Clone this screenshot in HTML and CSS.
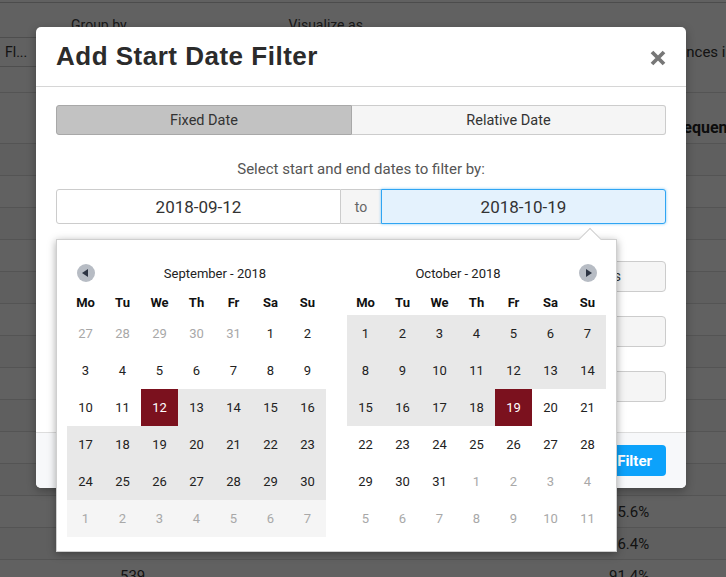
FILE: index.html
```html
<!DOCTYPE html>
<html>
<head>
<meta charset="utf-8">
<link rel="stylesheet" href="styles.css">
</head>
<body>
<div class="page">
  <div class="topline"></div>
  <div class="toolbar">
    <div class="tb-labels">
      <span class="lbl lbl-group">Group by</span>
      <span class="lbl lbl-vis">Visualize as</span>
    </div>
    <div class="tb-controls">
      <div class="fake-select">Fl...</div>
      <span class="occ">Occurrences in</span>
    </div>
  </div>
  <div class="thead"><span class="th-freq">Frequency</span></div>
  <div class="tbody">
    <div class="trow"></div><div class="trow"></div><div class="trow"></div><div class="trow"></div>
    <div class="trow"></div><div class="trow"></div><div class="trow"></div><div class="trow"></div>
    <div class="trow"></div><div class="trow"></div><div class="trow"></div>
    <div class="trow"><span class="c-num"></span><span class="c-pct">95.6%</span></div>
    <div class="trow"><span class="c-num"></span><span class="c-pct">96.4%</span></div>
    <div class="trow"><span class="c-num">539</span><span class="c-pct">91.4%</span></div>
  </div>

  <div class="overlay"></div>

  <div class="modal">
    <div class="modal-header">
      <h1 class="title">Add Start Date Filter</h1>
      <svg class="close" width="16" height="16" viewBox="0 0 16 16"><path d="M2 2 L14 14 M14 2 L2 14" stroke="#777" stroke-width="3.8" stroke-linecap="butt"/></svg>
    </div>
    <div class="modal-body">
      <div class="tabs">
        <div class="tab tab-active">Fixed Date</div>
        <div class="tab tab-other">Relative Date</div>
      </div>
      <p class="hint">Select start and end dates to filter by:</p>
      <div class="range">
        <div class="date-input">2018-09-12</div>
        <div class="to">to</div>
        <div class="date-input date-focus">2018-10-19</div>
      </div>
      <div class="form-rows">
        <div class="form-row"><div class="field">Periods</div></div>
        <div class="form-row"><div class="field"></div></div>
        <div class="form-row"><div class="field"></div></div>
      </div>

      <div class="picker">
        <div class="picker-arrow"></div>
        <div class="month">
          <div class="month-head">
            <span class="nav"><span class="nav-btn"><span class="tri tri-left"></span></span></span>
            <span class="month-title">September - 2018</span>
          </div>
          <div class="grid">
            <span class="dow">Mo</span><span class="dow">Tu</span><span class="dow">We</span><span class="dow">Th</span><span class="dow">Fr</span><span class="dow">Sa</span><span class="dow">Su</span>
            <span class="d off">27</span><span class="d off">28</span><span class="d off">29</span><span class="d off">30</span><span class="d off">31</span><span class="d">1</span><span class="d">2</span>
            <span class="d">3</span><span class="d">4</span><span class="d">5</span><span class="d">6</span><span class="d">7</span><span class="d">8</span><span class="d">9</span>
            <span class="d">10</span><span class="d">11</span><span class="d sel">12</span><span class="d in">13</span><span class="d in">14</span><span class="d in">15</span><span class="d in">16</span>
            <span class="d in">17</span><span class="d in">18</span><span class="d in">19</span><span class="d in">20</span><span class="d in">21</span><span class="d in">22</span><span class="d in">23</span>
            <span class="d in">24</span><span class="d in">25</span><span class="d in">26</span><span class="d in">27</span><span class="d in">28</span><span class="d in">29</span><span class="d in">30</span>
            <span class="d off in-light">1</span><span class="d off in-light">2</span><span class="d off in-light">3</span><span class="d off in-light">4</span><span class="d off in-light">5</span><span class="d off in-light">6</span><span class="d off in-light">7</span>
          </div>
        </div>
        <div class="month">
          <div class="month-head">
            <span class="month-title">October - 2018</span>
            <span class="nav"><span class="nav-btn"><span class="tri tri-right"></span></span></span>
          </div>
          <div class="grid">
            <span class="dow">Mo</span><span class="dow">Tu</span><span class="dow">We</span><span class="dow">Th</span><span class="dow">Fr</span><span class="dow">Sa</span><span class="dow">Su</span>
            <span class="d in">1</span><span class="d in">2</span><span class="d in">3</span><span class="d in">4</span><span class="d in">5</span><span class="d in">6</span><span class="d in">7</span>
            <span class="d in">8</span><span class="d in">9</span><span class="d in">10</span><span class="d in">11</span><span class="d in">12</span><span class="d in">13</span><span class="d in">14</span>
            <span class="d in">15</span><span class="d in">16</span><span class="d in">17</span><span class="d in">18</span><span class="d sel">19</span><span class="d">20</span><span class="d">21</span>
            <span class="d">22</span><span class="d">23</span><span class="d">24</span><span class="d">25</span><span class="d">26</span><span class="d">27</span><span class="d">28</span>
            <span class="d">29</span><span class="d">30</span><span class="d">31</span><span class="d off">1</span><span class="d off">2</span><span class="d off">3</span><span class="d off">4</span>
            <span class="d off">5</span><span class="d off">6</span><span class="d off">7</span><span class="d off">8</span><span class="d off">9</span><span class="d off">10</span><span class="d off">11</span>
          </div>
        </div>
      </div>
    </div>
    <div class="modal-footer">
      <button class="btn-primary">Add Filter</button>
    </div>
  </div>
</div>
</body>
</html>
```
FILE: styles.css
```css
* { box-sizing: border-box; }
html, body { margin: 0; padding: 0; }
body { font-family: Roboto, "Liberation Sans", sans-serif; color: #333; }

.page {
  width: 726px;
  height: 577px;
  position: relative;
  overflow: hidden;
  background: #fff;
  font-size: 14px;
}

/* background page */
.topline { height: 3px; border-bottom: 1px solid #c8c8c8; }
.toolbar {
  height: 90px;
  border-bottom: 1px solid #ddd;
  display: flex;
  flex-direction: column;
}
.tb-labels { display: flex; padding-top: 14px; height: 34px; }
.lbl { color: #444; font-size: 14px; }
.lbl-group { margin-left: 71px; }
.lbl-vis { margin-left: 162px; }
.tb-controls { display: flex; align-items: center; height: 30px; }
.fake-select {
  flex-shrink: 0;
  width: 60px;
  height: 30px;
  border: 1px solid #ccc;
  border-left: 0;
  padding: 6px 0 0 5px;
  font-size: 14px;
  color: #333;
}
.occ { flex-shrink: 0; margin-left: 574px; font-size: 15px; color: #333; white-space: nowrap; }

.thead {
  height: 51px;
  border-bottom: 1px solid #ddd;
  display: flex;
  align-items: flex-end;
  padding-bottom: 6px;
}
.th-freq { flex-shrink: 0; margin-left: 669px; font-weight: 700; font-size: 16px; white-space: nowrap; color: #222; }
.tbody { display: flex; flex-direction: column; }
.trow {
  height: 32px;
  border-bottom: 1px solid #ddd;
  display: flex;
  align-items: center;
  flex-shrink: 0;
}
.trow:nth-child(odd) { background: #fafafa; }
.c-num { flex-shrink: 0; width: 600px; padding-left: 120px; color: #333; font-size: 15px; }
.c-pct { flex-shrink: 0; padding-left: 9px; color: #333; font-size: 15px; }

.overlay { position: absolute; inset: 0; background: rgba(0, 0, 0, 0.62); }

/* modal */
.modal {
  position: absolute;
  left: 36px;
  top: 27px;
  width: 650px;
  height: 461px;
  background: #fff;
  border-radius: 5px;
  display: flex;
  flex-direction: column;
  box-shadow: 0 3px 10px rgba(0,0,0,.3);
}
.modal-header {
  height: 60px;
  border-bottom: 1px solid #d6d6d6;
  display: flex;
  align-items: center;
  justify-content: space-between;
  padding: 0 20px;
  flex-shrink: 0;
}
.title {
  margin: 0;
  font-family: "Liberation Sans", Arial, sans-serif;
  font-size: 26px;
  font-weight: 700;
  color: #2b2b2b;
  letter-spacing: 0.5px;
}
.close { display: block; margin-top: 2px; }

.modal-body {
  position: relative;
  flex: 1;
  padding: 18px 20px 0;
}
.tabs { display: flex; height: 30px; }
.tab {
  display: flex;
  align-items: center;
  justify-content: center;
  font-size: 14.5px;
  color: #333;
  padding-top: 1px;
}
.tab-active {
  width: 296px;
  background: #c2c2c2;
  border: 1px solid #a8a8a8;
  border-radius: 3px 0 0 3px;
}
.tab-other {
  flex: 1;
  background: #f5f5f5;
  border: 1px solid #ccc;
  border-left: 0;
  border-radius: 0 3px 3px 0;
}
.hint {
  margin: 24px 0 0;
  height: 20px;
  line-height: 20px;
  text-align: center;
  font-size: 15px;
  color: #555;
}
.range { display: flex; height: 35px; margin-top: 10px; }
.date-input {
  width: 285px;
  border: 1px solid #ccc;
  display: flex;
  align-items: center;
  justify-content: center;
  font-size: 17px;
  color: #333;
  background: #fff;
}
.date-input:first-child { border-radius: 3px 0 0 3px; }
.to {
  width: 40px;
  background: #f5f5f5;
  border-top: 1px solid #ccc;
  border-bottom: 1px solid #ccc;
  display: flex;
  align-items: center;
  justify-content: center;
  font-size: 14px;
  color: #666;
}
.date-focus {
  background: #e4f2fd;
  border: 1px solid #2fa5f3;
  border-radius: 0 3px 3px 0;
  box-shadow: 0 0 3px rgba(47,165,243,.6);
}
.form-rows {
  display: flex;
  flex-direction: column;
  gap: 24px;
  margin-top: 37px;
}
.form-row { display: flex; justify-content: flex-end; }
.field {
  width: 300px;
  height: 31px;
  border: 1px solid #ccc;
  border-radius: 4px;
  background: #f5f5f5;
  text-align: right;
  padding: 6px 44px 0 0;
  font-size: 14px;
  color: #333;
}

.modal-footer {
  height: 56px;
  border-top: 1px solid #ddd;
  background: #f7f8fa;
  display: flex;
  align-items: center;
  justify-content: flex-end;
  padding: 0 20px;
  border-radius: 0 0 5px 5px;
  flex-shrink: 0;
}
.btn-primary {
  height: 31px;
  padding: 0 14px;
  background: #0ca2fb;
  color: #fff;
  border: 0;
  border-radius: 4px;
  font-family: Roboto, "Liberation Sans", sans-serif;
  font-size: 15px;
  font-weight: 700;
}

/* date picker */
.picker {
  position: absolute;
  left: 20px;
  top: 152px;
  width: 561px;
  height: 313px;
  background: #fff;
  border: 1px solid #cfcfcf;
  box-shadow: 0 2px 8px rgba(0,0,0,.35);
  display: flex;
  gap: 21px;
  padding: 18px 10px 0;
}
.picker-arrow {
  position: absolute;
  top: -9px;
  left: 525px;
  width: 16px;
  height: 16px;
  background: #fff;
  border-left: 1px solid #cfcfcf;
  border-top: 1px solid #cfcfcf;
  transform: rotate(45deg);
}
.month { width: 259px; }
.month-head { display: flex; align-items: center; height: 30px; }
.nav { width: 37px; display: flex; justify-content: center; }
.nav-btn {
  width: 18px;
  height: 18px;
  border-radius: 50%;
  background: #b7bcc4;
  display: flex;
  align-items: center;
  justify-content: center;
}
.tri { width: 0; height: 0; border-top: 4px solid transparent; border-bottom: 4px solid transparent; }
.tri-left { border-right: 6px solid #2d3443; margin-left: -2px; }
.tri-right { border-left: 6px solid #2d3443; margin-left: 2px; }
.month-title { flex: 1; text-align: center; font-size: 13px; color: #222; }
.grid {
  display: grid;
  grid-template-columns: repeat(7, 37px);
  grid-auto-rows: 37px;
  grid-template-rows: 28px;
  margin-top: -1px;
}
.dow {
  display: flex;
  align-items: center;
  justify-content: center;
  font-weight: 700;
  font-size: 13px;
  color: #111;
  padding-top: 3px;
}
.d {
  display: flex;
  align-items: center;
  justify-content: center;
  font-size: 13px;
  color: #222;
}
.d.off { color: #a8a8a8; }
.d.in { background: #e8e8e8; }
.d.in-light { background: #f5f5f5; }
.d.sel { background: #7b111e; color: #fff; }
```
